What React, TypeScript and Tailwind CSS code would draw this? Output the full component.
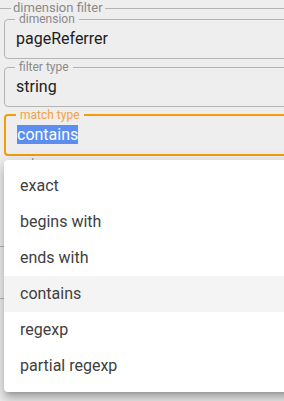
import React from 'react';

const options = ['exact', 'begins with', 'ends with', 'contains', 'regexp', 'partial regexp'];

const Field: React.FC<{ label: string; value?: string; active?: boolean; selected?: boolean }> = ({ label, value, active, selected }) => (
    <fieldset
        className={`rounded-[4px] px-[11px] pb-[10px] ${active ? 'border-2 border-[#f59b0c]' : 'border border-[#b4b4b4]'}`}
    >
        <legend className={`ml-[-1px] px-[4px] text-[12px] leading-[12px] ${active ? 'text-[#f4a23e]' : 'text-[#8a8a8a]'}`}>
            {label}
        </legend>
        <div className="pt-[4px] text-[16px] leading-[19px] text-[#202020] h-[23px]">
            {selected ? (
                <span className="bg-[#5b8ef0] text-white">{value}</span>
            ) : (
                value
            )}
        </div>
    </fieldset>
);

export default function App() {
    return (
        <div
            className="relative w-[284px] h-[401px] overflow-hidden bg-[#eeeeee]"
            style={{ fontFamily: 'Roboto, "Liberation Sans", sans-serif' }}
        >
            <div className="w-[320px] ml-[-2px] pt-[2px]">
                {/* Outer filter group */}
                <fieldset className="border-t border-l border-[#b4b4b4] pl-[5px]">
                    <legend className="ml-[7px] px-[2px] text-[13px] leading-[12px] text-[#8a8a8a]">dimension filter</legend>
                    <div className="-mt-[1px] flex flex-col gap-[2px]">
                        <Field label="dimension" value="pageReferrer" />
                        <Field label="filter type" value="string" />
                        <Field label="match type" value="contains" active selected />
                        <Field label="value" value="" />
                    </div>
                </fieldset>

                {/* Content behind the open menu */}
                <div className="mt-[42px] border-t border-[#b4b4b4] h-[52px]" />
                <div className="border-t border-[#b4b4b4] pl-[5px] pt-[8px]">
                    <div className="ml-[1px] h-[84px] rounded-[4px] border border-[#b4b4b4]" />
                </div>
            </div>

            {/* Open select menu */}
            <ul className="absolute left-[4px] top-[160px] w-[300px] rounded-[4px] bg-white py-[8px] shadow-[0px_5px_5px_-3px_rgba(0,0,0,0.2),0px_8px_10px_1px_rgba(0,0,0,0.14),0px_3px_14px_2px_rgba(0,0,0,0.12)]">
                {options.map((opt) => (
                    <li
                        key={opt}
                        className={`h-[36px] pl-[16px] flex items-center text-[16px] text-[#404040] ${opt === 'contains' ? 'bg-[#f4f4f4]' : ''}`}
                    >
                        {opt}
                    </li>
                ))}
            </ul>
        </div>
    );
}
